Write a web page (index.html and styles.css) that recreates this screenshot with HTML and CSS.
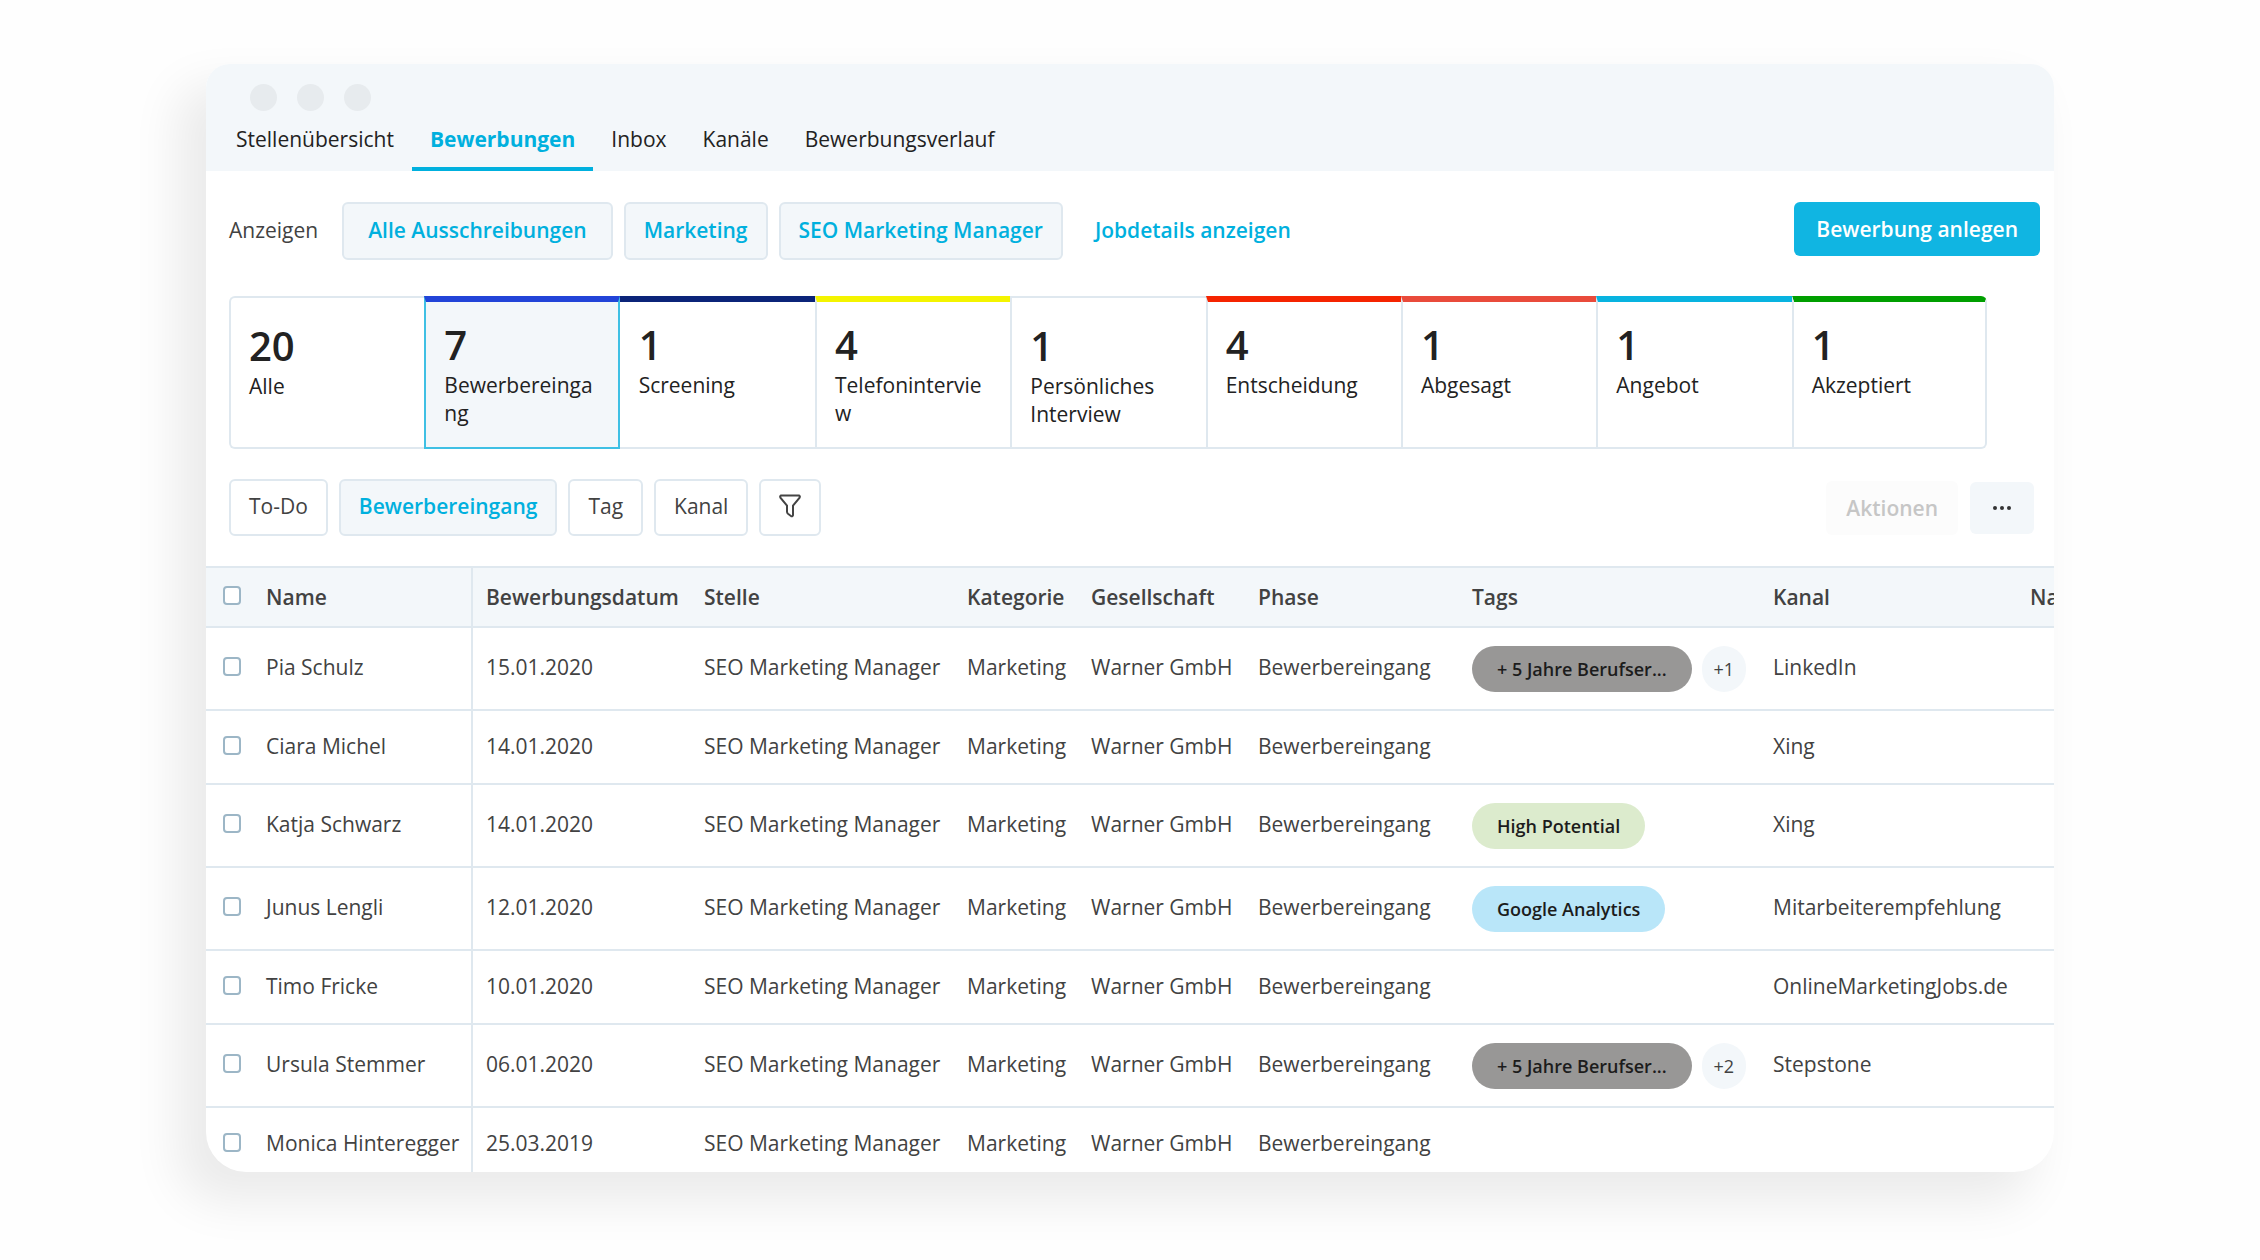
FILE: index.html
```html
<!DOCTYPE html>
<html lang="de">
<head>
<meta charset="utf-8">
<meta name="viewport" content="width=device-width, initial-scale=1">
<title>Bewerbungen</title>
<link rel="stylesheet" href="styles.css">
</head>
<body>
<main class="window">
  <header class="header">
    <div class="dots"><span class="dot"></span><span class="dot"></span><span class="dot"></span></div>
    <nav class="tabs">
      <a class="tab" href="#">Stellenübersicht</a>
      <a class="tab tab-active" href="#" aria-current="page">Bewerbungen</a>
      <a class="tab" href="#">Inbox</a>
      <a class="tab" href="#">Kanäle</a>
      <a class="tab" href="#">Bewerbungsverlauf</a>
    </nav>
  </header>

  <section class="toolbar">
    <span class="toolbar-label">Anzeigen</span>
    <div class="scope">
      <button class="btn btn-soft btn-wide" type="button">Alle Ausschreibungen</button>
      <button class="btn btn-soft" type="button">Marketing</button>
      <button class="btn btn-soft" type="button">SEO Marketing Manager</button>
    </div>
    <a class="details-link" href="#">Jobdetails anzeigen</a>
    <button class="btn btn-primary" type="button">Bewerbung anlegen</button>
  </section>

  <section class="phases">
    <button class="phase" type="button"><span class="count">20</span><span class="phase-name">Alle</span></button>
    <button class="phase barred bar-blue phase-active" type="button" aria-pressed="true"><span class="count">7</span><span class="phase-name">Bewerbereingang</span></button>
    <button class="phase barred bar-navy" type="button"><span class="count">1</span><span class="phase-name">Screening</span></button>
    <button class="phase barred bar-yellow" type="button"><span class="count">4</span><span class="phase-name">Telefoninterview</span></button>
    <button class="phase" type="button"><span class="count">1</span><span class="phase-name">Persönliches Interview</span></button>
    <button class="phase barred bar-red" type="button"><span class="count">4</span><span class="phase-name">Entscheidung</span></button>
    <button class="phase barred bar-coral" type="button"><span class="count">1</span><span class="phase-name">Abgesagt</span></button>
    <button class="phase barred bar-cyan" type="button"><span class="count">1</span><span class="phase-name">Angebot</span></button>
    <button class="phase barred bar-green" type="button"><span class="count">1</span><span class="phase-name">Akzeptiert</span></button>
  </section>

  <section class="filters">
    <button class="btn btn-outline" type="button">To-Do</button>
    <button class="btn btn-outline btn-soft" type="button" aria-pressed="true">Bewerbereingang</button>
    <button class="btn btn-outline" type="button">Tag</button>
    <button class="btn btn-outline" type="button">Kanal</button>
    <button class="btn btn-outline" type="button" aria-label="Filter">
      <svg class="funnel" viewBox="0 0 22 24" aria-hidden="true"><path d="M2 1.5H20Q21.3 2.2 20.6 3.6L14 11.6V21.2Q13.8 22.8 12.2 22.2L9 19.8Q8 19 8 17.8V11.6L1.4 3.6Q.7 2.2 2 1.5Z"/></svg>
    </button>
    <div class="actions">
      <button class="btn btn-disabled" type="button" disabled>Aktionen</button>
      <button class="btn btn-more" type="button" aria-label="Mehr">
        <svg class="more" viewBox="0 0 20 6" aria-hidden="true"><circle cx="3" cy="3" r="2"/><circle cx="10" cy="3" r="2"/><circle cx="17" cy="3" r="2"/></svg>
      </button>
    </div>
  </section>

  <div class="table-wrap">
    <table class="table">
      <colgroup>
        <col class="col-check"><col class="col-name"><col class="col-date"><col class="col-job"><col class="col-category"><col class="col-company"><col class="col-phase"><col class="col-tags"><col class="col-channel"><col class="col-extra">
      </colgroup>
      <thead>
        <tr><th class="check"><input type="checkbox" aria-label="Alle auswählen"></th><th class="name">Name</th><th>Bewerbungsdatum</th><th>Stelle</th><th>Kategorie</th><th>Gesellschaft</th><th>Phase</th><th>Tags</th><th>Kanal</th><th>Nachricht</th></tr>
      </thead>
      <tbody>
        <tr class="tagged"><td class="check"><input type="checkbox" aria-label="Pia Schulz"></td><td class="name">Pia Schulz</td><td>15.01.2020</td><td>SEO Marketing Manager</td><td>Marketing</td><td>Warner GmbH</td><td>Bewerbereingang</td><td class="tags"><div class="tag-list"><span class="tag tag-gray">+ 5 Jahre Berufser...</span><span class="more-tags">+1</span></div></td><td>LinkedIn</td><td></td></tr>
        <tr><td class="check"><input type="checkbox" aria-label="Ciara Michel"></td><td class="name">Ciara Michel</td><td>14.01.2020</td><td>SEO Marketing Manager</td><td>Marketing</td><td>Warner GmbH</td><td>Bewerbereingang</td><td></td><td>Xing</td><td></td></tr>
        <tr class="tagged"><td class="check"><input type="checkbox" aria-label="Katja Schwarz"></td><td class="name">Katja Schwarz</td><td>14.01.2020</td><td>SEO Marketing Manager</td><td>Marketing</td><td>Warner GmbH</td><td>Bewerbereingang</td><td class="tags"><div class="tag-list"><span class="tag tag-green">High Potential</span></div></td><td>Xing</td><td></td></tr>
        <tr class="tagged"><td class="check"><input type="checkbox" aria-label="Junus Lengli"></td><td class="name">Junus Lengli</td><td>12.01.2020</td><td>SEO Marketing Manager</td><td>Marketing</td><td>Warner GmbH</td><td>Bewerbereingang</td><td class="tags"><div class="tag-list"><span class="tag tag-blue">Google Analytics</span></div></td><td>Mitarbeiterempfehlung</td><td></td></tr>
        <tr><td class="check"><input type="checkbox" aria-label="Timo Fricke"></td><td class="name">Timo Fricke</td><td>10.01.2020</td><td>SEO Marketing Manager</td><td>Marketing</td><td>Warner GmbH</td><td>Bewerbereingang</td><td></td><td>OnlineMarketingJobs.de</td><td></td></tr>
        <tr class="tagged"><td class="check"><input type="checkbox" aria-label="Ursula Stemmer"></td><td class="name">Ursula Stemmer</td><td>06.01.2020</td><td>SEO Marketing Manager</td><td>Marketing</td><td>Warner GmbH</td><td>Bewerbereingang</td><td class="tags"><div class="tag-list"><span class="tag tag-gray">+ 5 Jahre Berufser...</span><span class="more-tags">+2</span></div></td><td>Stepstone</td><td></td></tr>
        <tr><td class="check"><input type="checkbox" aria-label="Monica Hinteregger"></td><td class="name">Monica Hinteregger</td><td>25.03.2019</td><td>SEO Marketing Manager</td><td>Marketing</td><td>Warner GmbH</td><td>Bewerbereingang</td><td></td><td></td><td></td></tr>
      </tbody>
    </table>
  </div>
</main>
</body>
</html>
```
FILE: styles.css
```css
:root {
  --accent: #00b0de;
  --line: #dfe8ef;
  --soft: #f3f7fa;
  --text: #424242;
  --ink: #222;
}

* { box-sizing: border-box; }

body {
  margin: 0;
  height: 100vh;
  padding: 64px 206px 88px;
  display: flex;
  flex-direction: column;
  background: #fefefe;
  color: var(--text);
  font: 21px/30px "Open Sans", "Noto Sans", sans-serif;
}

button {
  font: inherit;
  color: inherit;
  cursor: pointer;
}

a { text-decoration: none; }

.window {
  flex: 1;
  min-height: 0;
  overflow: hidden;
  background: #fff;
  border-radius: 24px 24px 40px 40px;
  box-shadow: -24px 26px 48px 4px rgba(0, 0, 0, .08);
}

.header {
  padding: 20px 12px 0;
  background: var(--soft);
}

.dots {
  display: flex;
  gap: 20px;
  padding-left: 32px;
}

.dot {
  width: 27px;
  height: 27px;
  border-radius: 50%;
  background: #e7ebee;
}

.tabs { display: flex; }

.tab {
  padding: 13px 18px;
  border-bottom: 4px solid transparent;
  color: var(--ink);
}

.tab-active {
  border-color: var(--accent);
  color: var(--accent);
  font-weight: 700;
}

.toolbar {
  display: flex;
  align-items: center;
  padding: 31px 14px 0 23px;
}

.toolbar-label {
  margin: 0 24px 2px 0;
}

.scope {
  display: flex;
  gap: 11px;
}

.btn {
  height: 58px;
  padding: 0 18px 2px;
  border: 2px solid transparent;
  border-radius: 6px;
  background: none;
  white-space: nowrap;
}

.btn-wide { padding: 0 24px 2px; }

.btn-outline {
  height: 57px;
  padding-bottom: 4px;
  border-color: var(--line);
}

.btn-soft {
  border-color: var(--line);
  background: var(--soft);
  color: var(--accent);
  font-weight: 600;
}

.details-link {
  margin: 0 0 2px 32px;
  color: var(--accent);
  font-weight: 600;
}

.btn-primary {
  height: 54px;
  margin: 0 0 4px auto;
  padding: 0 20px;
  background: #10b5e2;
  color: #fff;
  font-weight: 600;
}

.phases {
  display: grid;
  grid-template-columns: repeat(9, 1fr);
  margin: 36px 67px 0 23px;
}

.phase {
  display: flex;
  flex-direction: column;
  height: 153px;
  padding: 28px 16px 0 18px;
  border: 2px solid var(--line);
  border-right-width: 0;
  background: #fff;
  color: var(--ink);
  text-align: left;
}

.phase:first-child { border-radius: 6px 0 0 6px; }

.phase:last-child {
  border-right-width: 2px;
  border-radius: 0 6px 6px 0;
}

.barred {
  padding-top: 23px;
  border-top-width: 6px;
}

.phase-active {
  border-color: #3fc0e4;
  border-right-width: 2px;
  background: var(--soft);
}

.phase-active + .phase { border-left-width: 0; padding-left: 19px; }

.bar-blue { border-top-color: #2244d8; }
.bar-navy { border-top-color: #0b2479; }
.bar-yellow { border-top-color: #f4f400; }
.bar-red { border-top-color: #f52400; }
.bar-coral { border-top-color: #e94b3b; }
.bar-cyan { border-top-color: #08b3e0; }
.bar-green { border-top-color: #009f00; }

.count {
  margin-bottom: 6px;
  font-size: 40px;
  font-weight: 600;
  line-height: 40px;
}

.phase-name {
  max-width: 100%;
  line-height: 28px;
  overflow-wrap: anywhere;
}

.filters {
  display: flex;
  gap: 11px;
  padding: 30px 20px 30px 23px;
}

.funnel {
  display: block;
  width: 22px;
  height: 24px;
  fill: none;
  stroke: #444;
  stroke-width: 2;
}

.actions {
  display: flex;
  align-items: center;
  gap: 12px;
  margin-left: auto;
}

.btn-disabled {
  height: 54px;
  padding-bottom: 0;
  background: #fcfcfc;
  color: #c6c6c6;
  font-weight: 600;
  cursor: default;
}

.btn-more {
  height: 52px;
  padding: 0 20px;
  background: var(--soft);
}

.more {
  display: block;
  width: 20px;
  height: 6px;
  fill: #333;
}

.table-wrap { overflow: hidden; }

.table {
  width: 2060px;
  table-layout: fixed;
  border-collapse: separate;
  border-spacing: 0;
  border-top: 2px solid var(--line);
}

.col-check { width: 47px; }
.col-name { width: 220px; }
.col-date { width: 218px; }
.col-job { width: 263px; }
.col-category { width: 124px; }
.col-company { width: 167px; }
.col-phase { width: 214px; }
.col-tags { width: 301px; }
.col-channel { width: 257px; }
.col-extra { width: 249px; }

th,
td {
  height: 74px;
  padding: 0 0 3px 13px;
  border-bottom: 2px solid var(--line);
  text-align: left;
  vertical-align: middle;
  white-space: nowrap;
}

th {
  height: 60px;
  padding-bottom: 0;
  background: var(--soft);
  font-weight: 600;
}

.tagged td { height: 83px; }

th.check,
td.check {
  padding-bottom: 4px;
  padding-left: 17px;
}

.name { border-right: 2px solid var(--line); }

.tagged .tags { padding-bottom: 0; }

input[type="checkbox"] {
  appearance: none;
  display: block;
  width: 18px;
  height: 19px;
  margin: 0;
  border: 2px solid #9cb6c6;
  border-radius: 4px;
  background: #fff;
}

.tag-list {
  display: flex;
  align-items: center;
  gap: 10px;
}

.tag,
.more-tags {
  height: 46px;
  border-radius: 23px;
  font-size: 18px;
  line-height: 46px;
}

.tag {
  padding: 0 25px;
  color: #1c1c1c;
  font-weight: 600;
}

.more-tags {
  width: 44px;
  background: var(--soft);
  text-align: center;
}

.tag-gray { background: #989796; }
.tag-green { background: #dcebcd; }
.tag-blue { background: #b9e6f9; }
```
